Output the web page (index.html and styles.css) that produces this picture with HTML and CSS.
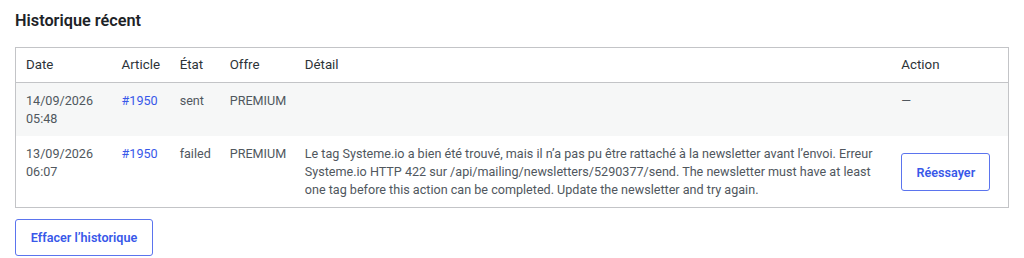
FILE: index.html
```html
<!DOCTYPE html>
<html lang="fr">

<head>
    <meta charset="UTF-8">
    <meta name="viewport" content="width=device-width, initial-scale=1.0">
    <title>Historique récent</title>
    <link rel="stylesheet" href="styles.css">
</head>

<body>
    <div class="wrap">
        <h2 class="title">Historique récent</h2>

        <table class="history">
            <thead>
                <tr>
                    <th class="col-date">Date</th>
                    <th class="col-article">Article</th>
                    <th class="col-state">État</th>
                    <th class="col-offer">Offre</th>
                    <th class="col-detail">Détail</th>
                    <th class="col-action">Action</th>
                </tr>
            </thead>
            <tbody>
                <tr class="alt">
                    <td>14/09/2026<br>05:48</td>
                    <td><a href="#">#1950</a></td>
                    <td>sent</td>
                    <td>PREMIUM</td>
                    <td></td>
                    <td>—</td>
                </tr>
                <tr>
                    <td>13/09/2026<br>06:07</td>
                    <td><a href="#">#1950</a></td>
                    <td>failed</td>
                    <td>PREMIUM</td>
                    <td>Le tag Systeme.io a bien été trouvé, mais il n’a pas pu être rattaché à la newsletter avant l’envoi. Erreur Systeme.io HTTP 422 sur /api/mailing/newsletters/5290377/send. The newsletter must have at least one tag before this action can be completed. Update the newsletter and try again.</td>
                    <td class="cell-action"><button class="btn btn-retry">Réessayer</button></td>
                </tr>
            </tbody>
        </table>

        <button class="btn btn-clear">Effacer l’historique</button>
    </div>
</body>

</html>
```

FILE: styles.css
```css
* {
    margin: 0;
    padding: 0;
    box-sizing: border-box;
}

body {
    background-color: #fff;
    font-family: Roboto, "Liberation Sans", sans-serif;
    font-size: 12.6px;
    color: #50575e;
}

.wrap {
    padding: 0 15px;
}

.title {
    font-size: 16.3px;
    line-height: 20px;
    font-weight: 600;
    color: #1d2327;
    margin: 11px 0 16px;
}

.history {
    width: 994px;
    table-layout: fixed;
    border-collapse: collapse;
    border: 1px solid #c3c4c7;
}

.history th,
.history td {
    padding: 9px 10px 8px;
    line-height: 18px;
    text-align: left;
    vertical-align: top;
}

.history th {
    padding: 8px 10px;
    font-size: 13.3px;
    font-weight: 400;
    color: #2c3338;
    border-bottom: 1px solid #c3c4c7;
}

.col-date { width: 96px; }
.col-article { width: 58px; }
.col-state { width: 50px; }
.col-offer { width: 75px; }
.col-detail { width: 596px; }
.col-action { width: 117px; }

.history tr.alt td {
    background-color: #f6f7f7;
}

.history a {
    color: #3858e9;
    text-decoration: none;
}

.history td.cell-action {
    vertical-align: middle;
}

.btn {
    font-family: inherit;
    font-size: 12.6px;
    font-weight: 600;
    color: #3858e9;
    background-color: #fff;
    border: 1px solid #5b74ee;
    border-radius: 3px;
    cursor: pointer;
}

.btn-retry {
    width: 89px;
    height: 38px;
}

.btn-clear {
    margin-top: 11px;
    width: 138px;
    height: 37px;
}
```
